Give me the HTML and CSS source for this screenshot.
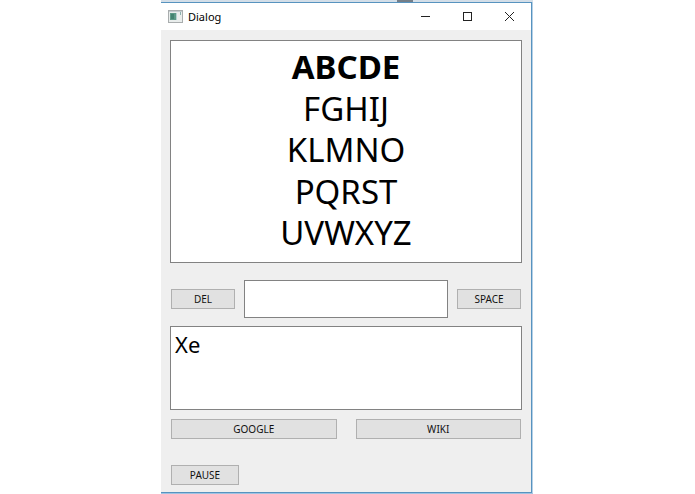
FILE: index.html
```html
<!DOCTYPE html>
<html lang="en">
<head>
<meta charset="utf-8">
<title>Dialog</title>
<link rel="stylesheet" href="styles.css">
</head>
<body>
<div class="backdrop">
  <div class="edge edge-top"><span class="edge-mark"></span></div>
  <main class="dialog">
    <header class="titlebar">
      <svg class="app-icon" width="15" height="13" viewBox="0 0 15 13" aria-hidden="true">
        <rect x=".5" y=".5" width="14" height="12" fill="#e9edec" stroke="#a9adae"/>
        <path d="M1 1.5h13" stroke="#c3cbd0"/>
        <rect x="2" y="3" width="6" height="7" fill="#5d9a88"/>
        <rect x="3" y="4" width="3" height="5" fill="#438371"/>
        <path d="M8.5 3v7" stroke="#b5d0d0"/>
        <path d="M12.5 2v3" stroke="#8bb1af"/>
      </svg>
      <h1 class="title">Dialog</h1>
      <div class="window-controls">
        <button class="window-button" type="button" aria-label="Minimize">
          <svg width="11" height="11" viewBox="0 0 11 11"><path d="M1 5.5h9" stroke="#222"/></svg>
        </button>
        <button class="window-button" type="button" aria-label="Maximize">
          <svg width="11" height="11" viewBox="0 0 11 11"><rect x="1.5" y="1.5" width="8" height="8" fill="none" stroke="#222"/></svg>
        </button>
        <button class="window-button" type="button" aria-label="Close">
          <svg width="11" height="11" viewBox="0 0 11 11"><path d="M1 1l9 9M10 1l-9 9" stroke="#222" fill="none"/></svg>
        </button>
      </div>
    </header>
    <div class="content">
      <div class="letters">
        <span class="row selected">ABCDE</span>
        <span class="row">FGHIJ</span>
        <span class="row">KLMNO</span>
        <span class="row">PQRST</span>
        <span class="row">UVWXYZ</span>
      </div>
      <div class="entry">
        <button class="button" type="button">DEL</button>
        <input class="field" type="text" aria-label="Current word">
        <button class="button" type="button">SPACE</button>
      </div>
      <textarea class="message" aria-label="Message">Xe</textarea>
      <div class="search">
        <button class="button" type="button">GOOGLE</button>
        <button class="button" type="button">WIKI</button>
      </div>
      <div class="footer">
        <button class="button pause" type="button">PAUSE</button>
      </div>
    </div>
  </main>
  <div class="edge edge-bottom"></div>
</div>
</body>
</html>
```
FILE: styles.css
```css
* {
  box-sizing: border-box;
}

body {
  margin: 0;
  background: #fff;
  color: #000;
  font-family: "Noto Sans", "Open Sans", sans-serif;
  font-size: 10px;
}

.backdrop {
  display: grid;
  grid-template-columns: 161fr 372fr 162fr;
}

.backdrop > * {
  grid-column: 2;
}

.edge-top {
  height: 2px;
  padding-left: 236px;
  background: #d3dee8;
}

.edge-mark {
  display: block;
  width: 16px;
  height: 2px;
  background: #747e88;
}

.edge-bottom {
  height: 1px;
  background: #9fc3e2;
}

.dialog {
  margin-right: 1px;
  border: 1px solid #5793bf;
  border-left: 0;
  background: #efefef;
  box-shadow: 1px 0 #b5d0e6;
}

.titlebar {
  display: flex;
  align-items: center;
  height: 27px;
  padding: 0 1px 0 7px;
  background: #fff;
}

.title {
  margin: 0 0 0 5px;
  font-size: 11px;
  font-weight: 400;
}

.window-controls {
  display: flex;
  margin-left: auto;
}

.window-button {
  display: flex;
  align-items: center;
  justify-content: center;
  width: 42px;
  height: 26px;
  padding: 0;
  border: 0;
  background: none;
}

.content {
  padding: 10px 9px 7px;
}

.letters {
  display: flex;
  flex-direction: column;
  align-items: center;
  height: 223px;
  padding: 5px 0 8px;
  border: 1px solid #828282;
  background: #fff;
  font-size: 33px;
  line-height: 41px;
}

.letters .row {
  flex: 1;
}

.selected {
  font-weight: 700;
}

.entry {
  display: grid;
  grid-template-columns: 64px 1fr 64px;
  align-items: center;
  gap: 9px;
  margin: 17px 1px 8px;
}

.button {
  height: 20px;
  padding: 0;
  border: 1px solid #b0b0b0;
  background: #e1e1e1;
  color: #111;
  font: inherit;
  line-height: 18px;
}

.field,
.message {
  display: block;
  width: 100%;
  border: 1px solid #828282;
  border-radius: 0;
  background: #fff;
  color: #000;
  font-family: inherit;
  font-size: 22px;
  outline: 0;
}

.field {
  height: 38px;
  padding: 0 4px;
}

.message {
  height: 84px;
  padding: 3px 4px;
  line-height: 28px;
  resize: none;
}

.search {
  display: grid;
  grid-template-columns: 1fr 1fr;
  gap: 19px;
  margin: 9px 1px 26px;
}

.footer {
  display: flex;
  margin: 0 1px;
}

.pause {
  width: 68px;
}
```
